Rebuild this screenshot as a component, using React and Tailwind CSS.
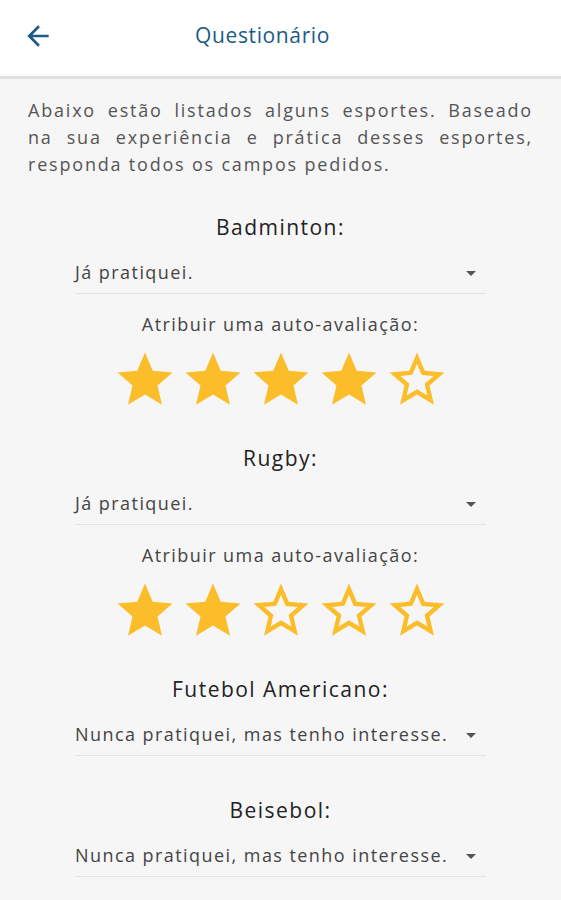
import { useState } from "react";

const STAR_FULL = "M12 17.27L18.18 21l-1.64-7.03L22 9.24l-7.19-.61L12 2 9.19 8.63 2 9.24l5.46 4.73L5.82 21z";
const STAR_BORDER =
  "M22 9.24l-7.19-.62L12 2 9.19 8.63 2 9.24l5.46 4.73L5.82 21 12 17.27 18.18 21l-1.63-7.03L22 9.24zM12 15.4l-3.76 2.27 1-4.28-3.32-2.88 4.38-.38L12 6.1l1.71 4.04 4.38.38-3.32 2.88 1 4.28L12 15.4z";

const sports = [
  { name: "Badminton:", answer: "Já pratiquei.", rating: 4 },
  { name: "Rugby:", answer: "Já pratiquei.", rating: 2 },
  { name: "Futebol Americano:", answer: "Nunca pratiquei, mas tenho interesse.", rating: null },
  { name: "Beisebol:", answer: "Nunca pratiquei, mas tenho interesse.", rating: null },
];

function Stars({ value, onChange }) {
  return (
    <div className="mt-[11px] flex justify-center gap-[2px]">
      {[1, 2, 3, 4, 5].map((n) => (
        <button key={n} onClick={() => onChange(n)} className="p-0">
          <svg width="66" height="66" viewBox="0 0 24 24" fill="#fbbd29">
            <path d={n <= value ? STAR_FULL : STAR_BORDER} />
          </svg>
        </button>
      ))}
    </div>
  );
}

function SportQuestion({ sport }) {
  const [rating, setRating] = useState(sport.rating);

  return (
    <div className={rating ? "mb-[31px]" : "mb-[40px]"}>
      <h2 className="h-[28px] text-center text-[21px] leading-[28px] tracking-[0.07em] text-[#222]">{sport.name}</h2>

      {/* Dropdown */}
      <div className="mx-auto mt-[11px] flex h-[42px] w-[411px] items-center justify-between border-b border-[#e3e3e3]">
        <span className="whitespace-nowrap text-[18px] tracking-[0.08em] text-[#444]">{sport.answer}</span>
        <svg width="24" height="24" viewBox="0 0 24 24" fill="#555" className="mr-[3px] shrink-0">
          <path d="M7 10l5 5 5-5z" />
        </svg>
      </div>

      {rating !== null && (
        <>
          <p className="mt-[18px] text-center text-[18px] leading-[24px] tracking-[0.08em] text-[#444]">
            Atribuir uma auto-avaliação:
          </p>
          <Stars value={rating} onChange={setRating} />
        </>
      )}
    </div>
  );
}

export default function App() {
  return (
    <div className="min-h-[900px] bg-[#f6f6f6] font-['Open_Sans',sans-serif]">
      {/* Header */}
      <div className="flex h-[79px] items-center border-b-[3px] border-[#e1e1e1] bg-white pb-[4px]">
        <button className="ml-[22px] text-[#1d5a86]">
          <svg width="32" height="32" viewBox="0 0 24 24" fill="currentColor">
            <path d="M20 11H7.83l5.59-5.59L12 4l-8 8 8 8 1.41-1.41L7.83 13H20v-2z" />
          </svg>
        </button>
        <h1 className="ml-[141px] text-[21px] tracking-[0.03em] text-[#1d5a86]">Questionário</h1>
      </div>

      {/* Content */}
      <div className="px-[28px] pt-[18px]">
        <p className="text-justify text-[18px] leading-[27px] tracking-[0.1em] text-[#555]">
          Abaixo estão listados alguns esportes. Baseado na sua experiência e prática desses esportes, responda
          todos os campos pedidos.
        </p>

        <div className="mt-[35px]">
          {sports.map((s) => (
            <SportQuestion key={s.name} sport={s} />
          ))}
        </div>
      </div>
    </div>
  );
}
